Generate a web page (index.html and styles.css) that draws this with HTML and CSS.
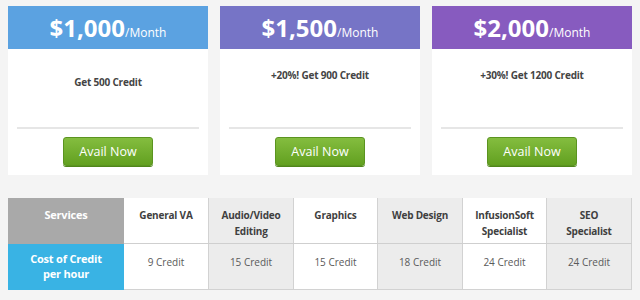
FILE: index.html
```html
<!DOCTYPE html>
<html>
<head>
<meta charset="utf-8">
<link rel="stylesheet" href="styles.css">
</head>
<body>
<div class="plans">
  <div class="card">
    <div class="card-head blue"><span class="price">$1,000</span><span class="per">/Month</span></div>
    <div class="card-body">
      <div class="desc desc-low">Get 500 Credit</div>
      <div class="divider"></div>
      <div class="action"><button class="btn">Avail Now</button></div>
    </div>
  </div>
  <div class="card">
    <div class="card-head purple"><span class="price">$1,500</span><span class="per">/Month</span></div>
    <div class="card-body">
      <div class="desc">+20%! Get 900 Credit</div>
      <div class="divider"></div>
      <div class="action"><button class="btn">Avail Now</button></div>
    </div>
  </div>
  <div class="card">
    <div class="card-head violet"><span class="price">$2,000</span><span class="per">/Month</span></div>
    <div class="card-body">
      <div class="desc">+30%! Get 1200 Credit</div>
      <div class="divider"></div>
      <div class="action"><button class="btn">Avail Now</button></div>
    </div>
  </div>
</div>

<table class="rates">
  <colgroup>
    <col class="c-first"><col class="c85"><col class="c85"><col class="c84"><col class="c85"><col class="c84"><col class="c85">
  </colgroup>
  <tr class="head-row">
    <th class="label-head">Services</th>
    <th>General VA</th>
    <th class="alt">Audio/Video<br>Editing</th>
    <th>Graphics</th>
    <th class="alt">Web Design</th>
    <th>InfusionSoft<br>Specialist</th>
    <th class="alt">SEO<br>Specialist</th>
  </tr>
  <tr class="body-row">
    <th class="label-body">Cost of Credit<br>per hour</th>
    <td>9 Credit</td>
    <td class="alt">15 Credit</td>
    <td>15 Credit</td>
    <td class="alt">18 Credit</td>
    <td>24 Credit</td>
    <td class="alt">24 Credit</td>
  </tr>
</table>
</body>
</html>
```
FILE: styles.css
```css
html, body {
  background: #f4f4f4;
}
body {
  margin: 0;
  padding: 6px 8px 0 8px;
  font-family: "Open Sans", "DejaVu Sans", sans-serif;
}
.plans {
  display: flex;
  gap: 12px;
}
.card {
  width: 200px;
  background: #fff;
}
.card-head {
  height: 43px;
  display: flex;
  align-items: center;
  justify-content: center;
  color: #fff;
}
.blue { background: #5ba2e1; }
.purple { background: #7674c6; }
.violet { background: #875bbf; }
.price {
  font-size: 24px;
  font-weight: 700;
  line-height: 1;
}
.per {
  font-size: 12px;
  align-self: center;
  margin-top: 9px;
}
.card-body {
  height: 126px;
  box-sizing: border-box;
  padding: 0 9px 9px;
  display: flex;
  flex-direction: column;
}
.desc {
  flex: 1;
  padding-top: 19px;
  text-align: center;
  font-size: 10px;
  font-weight: 700;
  color: #444;
  line-height: 15px;
  letter-spacing: -0.2px;
}
.desc-low {
  padding-top: 26px;
}
.divider {
  height: 2px;
  background: #e6e6e6;
}
.action {
  display: flex;
  justify-content: center;
  padding-top: 8px;
}
.btn {
  width: 90px;
  height: 29px;
  border: 1px solid #5b9420;
  border-radius: 3px;
  background: linear-gradient(#84bd3f, #62a020);
  color: #fff;
  font-family: "Open Sans", sans-serif;
  font-size: 12.5px;
  padding: 0;
  box-shadow: 0 1px 0 #4f861a;
}
.rates {
  margin-top: 23px;
  border-collapse: collapse;
  table-layout: fixed;
  width: 623px;
  background: #fff;
}
.c-first { width: 115px; }
.c85 { width: 85px; }
.c84 { width: 84px; }
.rates th, .rates td {
  text-align: center;
  vertical-align: top;
  padding: 0;
  font-size: 10px;
  border-left: 1px solid #d2d2d2;
  border-right: 1px solid #d2d2d2;
}
.rates th {
  font-weight: 700;
  color: #3f3f3f;
  letter-spacing: -0.2px;
}
.rates td {
  color: #5a5a5a;
  line-height: 15px;
  padding-top: 11px;
}
.head-row th {
  height: 45px;
  box-sizing: border-box;
  padding-top: 9px;
  line-height: 16px;
  border-bottom: 1px solid #cfcfcf;
}
.body-row th, .body-row td {
  height: 46px;
  box-sizing: border-box;
  border-bottom: 1px solid #d2d2d2;
}
.rates .alt { background: #ececec; }
.rates .label-head {
  background: #a9a9a9;
  color: #fff;
  font-size: 11px;
  border-color: #a9a9a9;
}
.rates .label-body {
  background: #39b3e4;
  color: #fff;
  font-size: 11px;
  line-height: 15px;
  vertical-align: middle;
  border-color: #39b3e4;
}
```
